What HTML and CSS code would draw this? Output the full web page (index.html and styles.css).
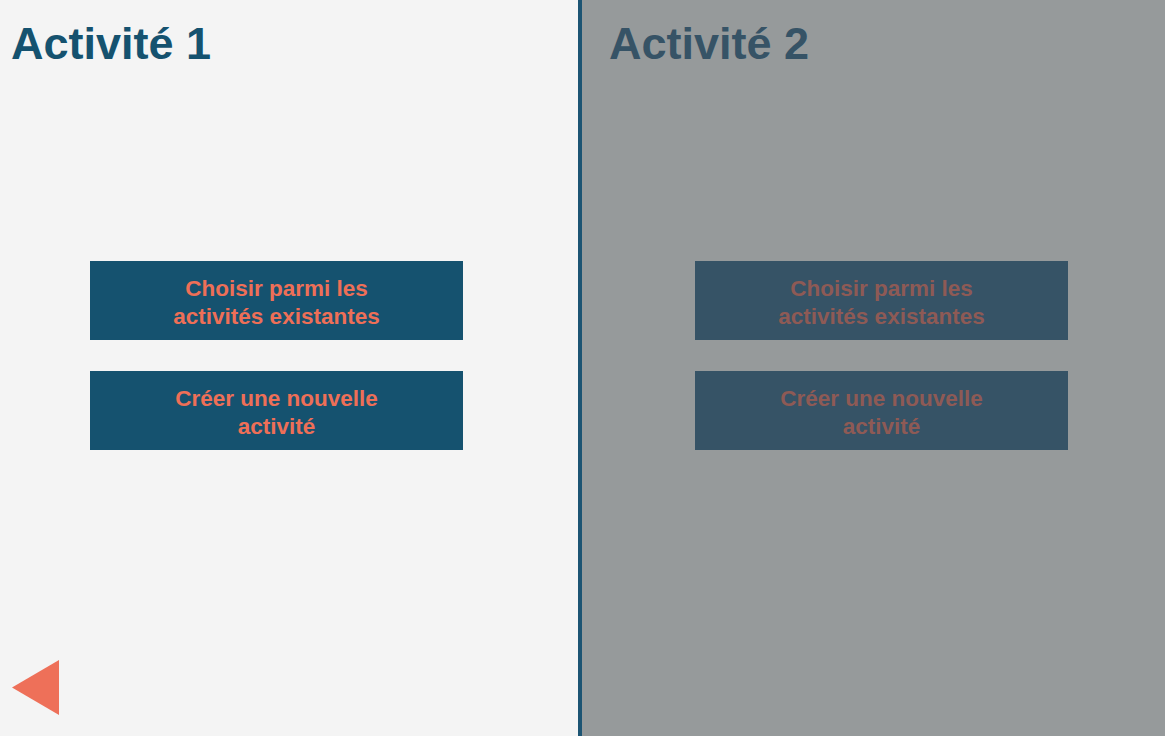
FILE: index.html
```html
<!DOCTYPE html>
<html lang="fr">
<head>
    <meta charset="utf-8">
    <meta name="viewport" content="width=device-width, initial-scale=1.0">
    <title>Activités</title>
    <link rel="stylesheet" href="styles.css">
</head>
<body>
    <div class="screen">
        <div class="panel panel-left">
            <h1 class="panel-title">Activité 1</h1>
            <div class="actions">
                <button class="action-btn">Choisir parmi les<br>activités existantes</button>
                <button class="action-btn">Créer une nouvelle<br>activité</button>
            </div>
            <button class="back-btn" aria-label="Retour">
                <svg width="47" height="55" viewBox="0 0 47 55"><polygon points="0,27.5 47,0 47,55" fill="#ee7059"/></svg>
            </button>
        </div>
        <div class="divider"></div>
        <div class="panel panel-right">
            <h1 class="panel-title">Activité 2</h1>
            <div class="actions">
                <button class="action-btn">Choisir parmi les<br>activités existantes</button>
                <button class="action-btn">Créer une nouvelle<br>activité</button>
            </div>
        </div>
    </div>
</body>
</html>
```

FILE: styles.css
```css
body {
    margin: 0;
    font-family: "Liberation Sans", Arial, Helvetica, sans-serif;
    background: #f4f4f4;
}
.screen {
    display: flex;
    width: 1165px;
    height: 736px;
    overflow: hidden;
}
.panel {
    display: flex;
    flex-direction: column;
}
.panel-left {
    width: 578px;
    background: #f4f4f4;
}
.panel-right {
    flex: 1;
    background: #969a9b;
}
.divider {
    width: 4px;
    background: #1c5473;
}
.panel-title {
    margin: 21px 0 0 0;
    font-size: 45px;
    line-height: 45px;
    font-weight: bold;
    color: #15526f;
}
.panel-left .panel-title {
    padding-left: 11px;
}
.panel-right .panel-title {
    padding-left: 27px;
    color: #365366;
}
.actions {
    display: flex;
    flex-direction: column;
    gap: 31px;
    margin-top: 195px;
}
.panel-left .actions {
    padding-left: 90px;
}
.panel-right .actions {
    padding-left: 113px;
}
.action-btn {
    width: 373px;
    height: 79px;
    border: none;
    padding: 4px 0 0 0;
    background: #15526f;
    color: #ee6f57;
    font-family: inherit;
    font-size: 22.5px;
    line-height: 28px;
    font-weight: bold;
    text-align: center;
    cursor: pointer;
}
.panel-right .action-btn {
    background: #365366;
    color: #8e5a55;
    cursor: default;
}
.back-btn {
    margin: auto 0 21px 12px;
    padding: 0;
    border: none;
    background: none;
    width: 47px;
    height: 55px;
    cursor: pointer;
}
.back-btn svg {
    display: block;
}
```
